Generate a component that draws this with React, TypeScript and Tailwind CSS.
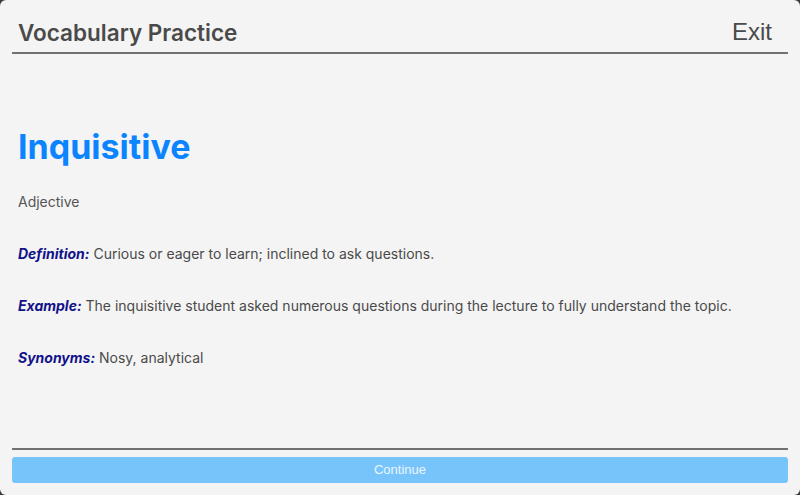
export default function App() {
  return (
    <div className="w-[800px] h-[495px] bg-[#3a3a3a]">
      <div
        className="w-full h-full bg-[#f4f4f4] rounded-[6px] flex flex-col px-3"
        style={{ fontFamily: 'Inter, "Noto Sans", sans-serif' }}
      >
        {/* Header */}
        <div className="flex items-end justify-between h-[54px] border-b-2 border-[#707070] pl-1.5 pr-4 pb-[8px]">
          <div className="text-[22.5px] font-semibold text-[#4a4a4a] leading-none">Vocabulary Practice</div>
          <button
            className="text-[24px] text-[#4a4a4a] leading-none"
            style={{ fontFamily: '"Liberation Sans", Arial, sans-serif' }}
          >
            Exit
          </button>
        </div>

        {/* Word card */}
        <div className="flex-1 px-1.5 pt-[76px]">
          <h1 className="text-[34px] font-bold text-[#0a84ff] leading-none">Inquisitive</h1>
          <p className="mt-[28px] text-[14px] leading-5 text-[#555]">Adjective</p>
          <div className="mt-[32px] flex flex-col gap-[32px] text-[14px] leading-5 text-[#4a4a4a]">
            <p>
              <span className="font-bold italic text-[#12128a]">Definition:</span> Curious or eager to learn; inclined to ask questions.
            </p>
            <p>
              <span className="font-bold italic text-[#12128a]">Example:</span> The inquisitive student asked numerous questions during the lecture to fully understand the topic.
            </p>
            <p>
              <span className="font-bold italic text-[#12128a]">Synonyms:</span> Nosy, analytical
            </p>
          </div>
        </div>

        {/* Footer */}
        <div className="border-t-2 border-[#707070] pt-[6px] pb-[12px]">
          <button
            className="w-full h-[26px] rounded-[3px] bg-[#77c4fb] text-[13px] text-[#eaf5ff]"
            style={{ fontFamily: '"Liberation Sans", Arial, sans-serif' }}
          >
            Continue
          </button>
        </div>
      </div>
    </div>
  );
}
